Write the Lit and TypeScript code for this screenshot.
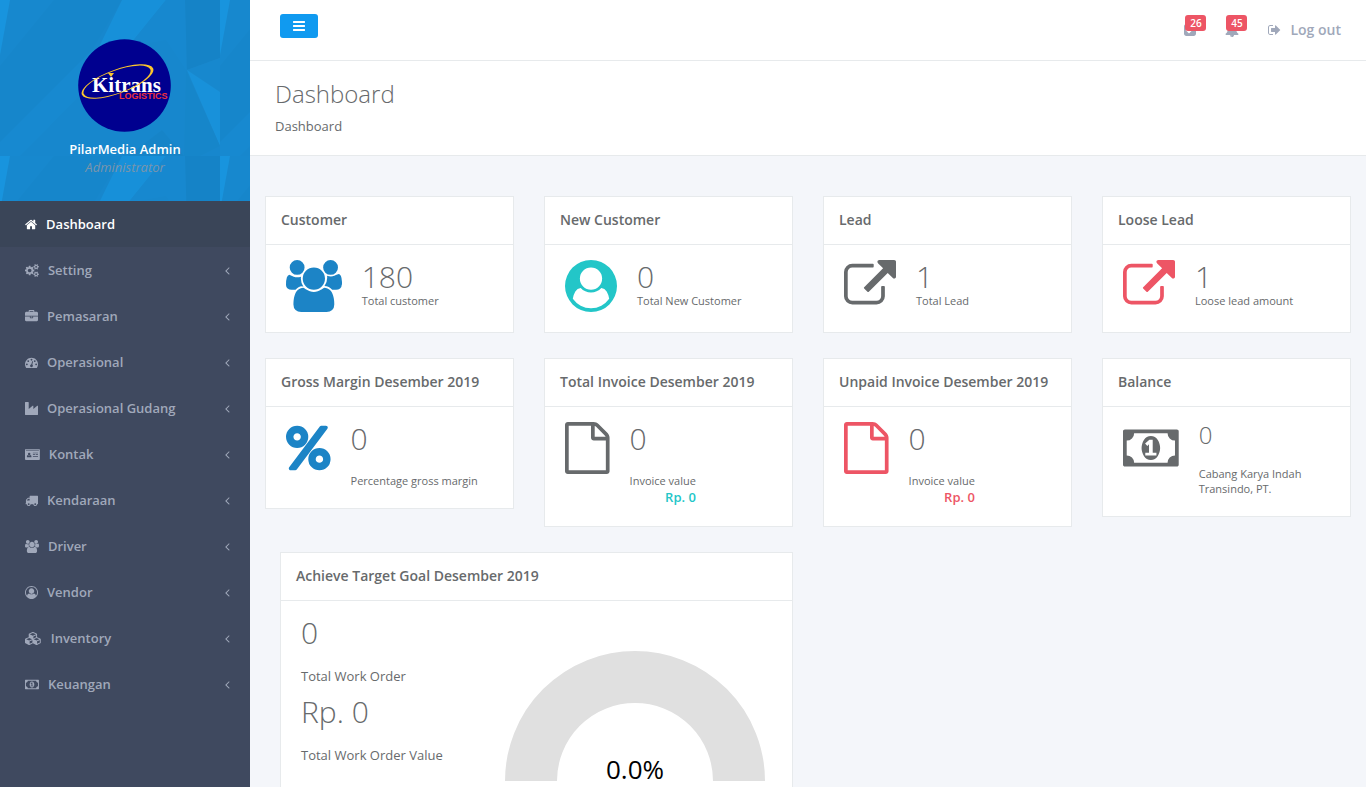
import { LitElement, html, svg, css, nothing } from "lit";
import { customElement, property, state } from "lit/decorators.js";

type Glyph = { w: number; d: string };

// Icon outlines on a 1792-unit tall grid, keyed by name.
const GLYPHS: Record<string, Glyph> = {
  home: { w: 1664, d: "M1408 992v480q0 26-19 45t-45 19h-384v-384h-256v384h-384q-26 0-45-19t-19-45v-480q0-1 .5-3t.5-3l575-474 575 474q1 2 1 6zm223-69l-62 74q-8 9-21 11h-3q-13 0-21-7l-692-577-692 577q-12 8-24 7-13-2-21-11l-62-74q-8-10-7-23.5t11-21.5l719-599q32-26 76-26t76 26l244 204v-195q0-14 9-23t23-9h192q14 0 23 9t9 23v408l219 182q10 8 11 21.5t-7 23.5z" },
  cogs: { w: 1920, d: "M896 896q0-106-75-181t-181-75-181 75-75 181 75 181 181 75 181-75 75-181zm768 512q0-52-38-90t-90-38-90 38-38 90q0 53 37.5 90.5t90.5 37.5 90.5-37.5 37.5-90.5zm0-1024q0-52-38-90t-90-38-90 38-38 90q0 53 37.5 90.5t90.5 37.5 90.5-37.5 37.5-90.5zm-384 421v185q0 10-7 19.5t-16 10.5l-155 24q-11 35-32 76 34 48 90 115 7 11 7 20 0 12-7 19-23 30-82.5 89.5t-78.5 59.5q-11 0-21-7l-115-90q-37 19-77 31-11 108-23 155-7 24-30 24h-186q-11 0-20-7.5t-10-17.5l-23-153q-34-10-75-31l-118 89q-7 7-20 7-11 0-21-8-144-133-144-160 0-9 7-19 10-14 41-53t47-61q-23-44-35-82l-152-24q-10-1-17-9.5t-7-19.5v-185q0-10 7-19.5t16-10.5l155-24q11-35 32-76-34-48-90-115-7-11-7-20 0-12 7-20 22-30 82-89t79-59q11 0 21 7l115 90q34-18 77-32 11-108 23-154 7-24 30-24h186q11 0 20 7.5t10 17.5l23 153q34 10 75 31l118-89q8-7 20-7 11 0 21 8 144 133 144 160 0 8-7 19-12 16-42 54t-45 60q23 48 34 82l152 23q10 2 17 10.5t7 19.5zm640 533v140q0 16-149 31-12 27-30 52 51 113 51 138 0 4-4 7-122 71-124 71-8 0-46-47t-52-68q-20 2-30 2t-30-2q-14 21-52 68t-46 47q-2 0-124-71-4-3-4-7 0-25 51-138-18-25-30-52-149-15-149-31v-140q0-16 149-31 13-29 30-52-51-113-51-138 0-4 4-7 4-2 35-20t59-34 30-16q8 0 46 46.5t52 67.5q20-2 30-2t30 2q51-71 92-112l6-2q4 0 124 70 4 3 4 7 0 25-51 138 17 23 30 52 149 15 149 31zm0-1024v140q0 16-149 31-12 27-30 52 51 113 51 138 0 4-4 7-122 71-124 71-8 0-46-47t-52-68q-20 2-30 2t-30-2q-14 21-52 68t-46 47q-2 0-124-71-4-3-4-7 0-25 51-138-18-25-30-52-149-15-149-31v-140q0-16 149-31 13-29 30-52-51-113-51-138 0-4 4-7 4-2 35-20t59-34 30-16q8 0 46 46.5t52 67.5q20-2 30-2t30 2q51-71 92-112l6-2q4 0 124 70 4 3 4 7 0 25-51 138 17 23 30 52 149 15 149 31z" },
  briefcase: { w: 1792, d: "M640 256h512v-128h-512v128zm1152 640v480q0 66-47 113t-113 47h-1472q-66 0-113-47t-47-113v-480h672v160q0 26 19 45t45 19h320q26 0 45-19t19-45v-160h672zm-768 0v128h-256v-128h256zm768-480v384h-1792v-384q0-66 47-113t113-47h352v-160q0-40 28-68t68-28h576q40 0 68 28t28 68v160h352q66 0 113 47t47 113z" },
  tachometer: { w: 1792, d: "M384 1152q0-53-37.5-90.5t-90.5-37.5-90.5 37.5-37.5 90.5 37.5 90.5 90.5 37.5 90.5-37.5 37.5-90.5zm192-448q0-53-37.5-90.5t-90.5-37.5-90.5 37.5-37.5 90.5 37.5 90.5 90.5 37.5 90.5-37.5 37.5-90.5zm428 481l101-382q6-26-7.5-48.5t-38.5-29.5-48 6.5-30 39.5l-101 382q-60 5-107 43.5t-63 98.5q-20 77 20 146t117 89 146-20 89-117q16-60-6-117t-72-91zm660-33q0-53-37.5-90.5t-90.5-37.5-90.5 37.5-37.5 90.5 37.5 90.5 90.5 37.5 90.5-37.5 37.5-90.5zm-640-640q0-53-37.5-90.5t-90.5-37.5-90.5 37.5-37.5 90.5 37.5 90.5 90.5 37.5 90.5-37.5 37.5-90.5zm448 192q0-53-37.5-90.5t-90.5-37.5-90.5 37.5-37.5 90.5 37.5 90.5 90.5 37.5 90.5-37.5 37.5-90.5zm320 448q0 261-141 483-19 29-54 29h-1402q-35 0-54-29-141-221-141-483 0-182 71-348t191-286 286-191 348-71 348 71 286 191 191 286 71 348z" },
  industry: { w: 1792, d: "M448 0q26 0 45 19t19 45v891l536-429q17-14 40-14 26 0 45 19t19 45v379l536-429q17-14 40-14 26 0 45 19t19 45v1152q0 26-19 45t-45 19h-1664q-26 0-45-19t-19-45v-1664q0-26 19-45t45-19h384z" },
  idcard: { w: 2048, d: "M160 128h1728q66 0 113 47t47 113v1216q0 66-47 113t-113 47h-1728q-66 0-113-47t-47-113v-1216q0-66 47-113t113-47zM128 256v96h1792v-96zM576 640a170 180 0 0 0 0 360a170 180 0 0 0 0-360zM400 960q-144 20-144 240q0 80 90 80h460q90 0 90-80q0-220-144-240q-70 90-176 90t-176-90zM1088 640v96h704v-96zM1088 864v96h320v-96zM1504 864v96h288v-96zM1088 1120v96h704v-96z" },
  truck: { w: 1792, d: "M640 1408q0-52-38-90t-90-38-90 38-38 90 38 90 90 38 90-38 38-90zm-384-512h384v-256h-158q-13 0-22 9l-195 195q-9 9-9 22v30zm1280 512q0-52-38-90t-90-38-90 38-38 90 38 90 90 38 90-38 38-90zm256-1088v1024q0 15-4 26.5t-13.5 18.5-16.5 11.5-23.5 6-22.5 2-25.5 0-22.5-.5q0 106-75 181t-181 75-181-75-75-181h-384q0 106-75 181t-181 75-181-75-75-181h-64q-3 0-22.5.5t-25.5 0-22.5-2-23.5-6-16.5-11.5-13.5-18.5-4-26.5q0-26 19-45t45-19v-320q0-8-.5-35t0-38 2.5-34.5 6.5-37 14-30.5 22.5-30l198-198q19-19 50.5-32t58.5-13h160v-192q0-26 19-45t45-19h1024q26 0 45 19t19 45z" },
  users: { w: 1920, d: "M593 896q-162 5-265 128h-134q-82 0-138-40.5t-56-118.5q0-353 124-353 6 0 43.5 21t97.5 42.5 119 21.5q67 0 133-23-5 37-5 66 0 159 93 287zm1071 637q0 120-73 189.5t-194 69.5h-874q-121 0-194-69.5t-73-189.5q0-53 3.5-103.5t14-109 26.5-108.5 43-97.5 62-81 85.5-53.5 111.5-20q10 0 43 21.5t73 48 107 48 135 21.5 135-21.5 107-48 73-48 43-21.5q61 0 111.5 20t85.5 53.5 62 81 43 97.5 26.5 108.5 14 109 3.5 103.5zm-1024-1277q0 106-75 181t-181 75-181-75-75-181 75-181 181-75 181 75 75 181zm704 384q0 159-112.5 271.5t-271.5 112.5-271.5-112.5-112.5-271.5 112.5-271.5 271.5-112.5 271.5 112.5 112.5 271.5zm576 225q0 78-56 118.5t-138 40.5h-134q-103-123-265-128 93-128 93-287 0-29-5-66 66 23 133 23 59 0 119-21.5t97.5-42.5 43.5-21q124 0 124 353zm-128-609q0 106-75 181t-181 75-181-75-75-181 75-181 181-75 181 75 75 181z" },
  userRing: { w: 1792, d: "M896 0q182 0 348 71t286 191 191 286 71 348q0 181-70.5 347t-190.5 286-286 191.5-349 71.5-349-71-285.5-191.5-190.5-286-71-347.5 71-348 191-286 286-191 348-71zm619 1351q149-205 149-455 0-156-61-298t-164-245-245-164-298-61-298 61-245 164-164 245-61 298q0 250 149 455 66-327 306-327 131 128 313 128t313-128q240 0 306 327zm-235-647q0-159-112.5-271.5t-271.5-112.5-271.5 112.5-112.5 271.5 112.5 271.5 271.5 112.5 271.5-112.5 112.5-271.5z" },
  userDisc: { w: 1792, d: "M1523 1339q-22-155-87.5-257.5t-184.5-118.5q-67 74-159.5 115.5t-195.5 41.5-195.5-41.5-159.5-115.5q-119 16-184.5 118.5t-87.5 257.5q106 150 271 237.5t356 87.5 356-87.5 271-237.5zm-243-699q0-159-112.5-271.5t-271.5-112.5-271.5 112.5-112.5 271.5 112.5 271.5 271.5 112.5 271.5-112.5 112.5-271.5zm512 256q0 182-71 347.5t-190.5 286-285.5 191.5-349 71q-182 0-348-71t-286-191-191-286-71-348 71-348 191-286 286-191 348-71 348 71 286 191 191 286 71 348z" },
  cubes: { w: 2304, d: "M640 1632l384-192v-314l-384 164v342zm-64-454l404-173-404-173-404 173zm1088 454l384-192v-314l-384 164v342zm-64-454l404-173-404-173-404 173zm-448-293l384-165v-266l-384 164v267zm-64-379l441-189-441-189-441 189zm1088 518v416q0 36-19 67t-52 47l-448 224q-25 14-57 14t-57-14l-448-224q-4-2-7-4-2 2-7 4l-448 224q-25 14-57 14t-57-14l-448-224q-33-16-52-47t-19-67v-416q0-38 21.5-70t56.5-48l434-186v-400q0-38 21.5-70t56.5-48l448-192q23-10 50-10t50 10l448 192q35 16 56.5 48t21.5 70v400l434 186q36 16 57 48t21 70z" },
  money: { w: 1920, d: "M768 1152h384v-96h-128v-448h-114l-148 137 77 80q42-37 55-57h2v288h-128v96zm512-256q0 70-21 142t-59.5 134-101.5 101-138 39-138-39-101.5-101-59.5-134-21-142 21-142 59.5-134 101.5-101 138-39 138 39 101.5 101 59.5 134 21 142zm512 256v-512q-106 0-181-75t-75-181h-1152q0 106-75 181t-181 75v512q106 0 181 75t75 181h1152q0-106 75-181t181-75zm128-832v1152q0 26-19 45t-45 19h-1792q-26 0-45-19t-19-45v-1152q0-26 19-45t45-19h1792q26 0 45 19t19 45z" },
  external: { w: 1792, d: "M1408 928v320q0 119-84.5 203.5t-203.5 84.5h-832q-119 0-203.5-84.5t-84.5-203.5v-832q0-119 84.5-203.5t203.5-84.5h704q14 0 23 9t9 23v64q0 14-9 23t-23 9h-704q-66 0-113 47t-47 113v832q0 66 47 113t113 47h832q66 0 113-47t47-113v-320q0-14 9-23t23-9h64q14 0 23 9t9 23zm384-864v512q0 26-19 45t-45 19-45-19l-176-176-652 652q-10 10-23 10t-23-10l-114-114q-10-10-10-23t10-23l652-652-176-176q-19-19-19-45t19-45 45-19h512q26 0 45 19t19 45z" },
  percent: { w: 1536, d: "M1280 1280q0-52-38-90t-90-38-90 38-38 90 38 90 90 38 90-38 38-90zm-768-768q0-52-38-90t-90-38-90 38-38 90 38 90 90 38 90-38 38-90zm1024 768q0 159-112.5 271.5t-271.5 112.5-271.5-112.5-112.5-271.5 112.5-271.5 271.5-112.5 271.5 112.5 112.5 271.5zm-96-1088q0 20-13 38l-1056 1408q-19 26-51 26h-160q-26 0-45-19t-19-45q0-20 13-38l1056-1408q19-26 51-26h160q26 0 45 19t19 45zm-672 320q0 159-112.5 271.5t-271.5 112.5-271.5-112.5-112.5-271.5 112.5-271.5 271.5-112.5 271.5 112.5 112.5 271.5z" },
  file: { w: 1536, d: "M1468 380q28 28 48 76t20 88v1152q0 40-28 68t-68 28h-1344q-40 0-68-28t-28-68v-1600q0-40 28-68t68-28h896q40 0 88 20t76 48zm-444-244v376h376q-10-29-22-41l-313-313q-12-12-41-22zm384 1528v-1024h-416q-40 0-68-28t-28-68v-416h-768v1536h1280z" },
  angle: { w: 640, d: "M627 544q0 13-10 23l-393 393 393 393q10 10 10 23t-10 23l-50 50q-10 10-23 10t-23-10l-466-466q-10-10-10-23t10-23l466-466q10-10 23-10t23 10l50 50q10 10 10 23z" },
  bars: { w: 1536, d: "M1536 1344v128q0 26-19 45t-45 19h-1408q-26 0-45-19t-19-45v-128q0-26 19-45t45-19h1408q26 0 45 19t19 45zm0-512v128q0 26-19 45t-45 19h-1408q-26 0-45-19t-19-45v-128q0-26 19-45t45-19h1408q26 0 45 19t19 45zm0-512v128q0 26-19 45t-45 19h-1408q-26 0-45-19t-19-45v-128q0-26 19-45t45-19h1408q26 0 45 19t19 45z" },
  check: { w: 1536, d: "M685 1299l614-614q19-19 19-45t-19-45l-102-102q-19-19-45-19t-45 19l-467 467-211-211q-19-19-45-19t-45 19l-102 102q-19 19-19 45t19 45l358 358q19 19 45 19t45-19zm851-883v960q0 119-84.5 203.5t-203.5 84.5h-960q-119 0-203.5-84.5t-84.5-203.5v-960q0-119 84.5-203.5t203.5-84.5h960q119 0 203.5 84.5t84.5 203.5z" },
  bell: { w: 1792, d: "M912 1696q0-16-16-16-59 0-101.5-42.5t-42.5-101.5q0-16-16-16t-16 16q0 73 51.5 124.5t124.5 51.5q16 0 16-16zm816-288q0 52-38 90t-90 38h-448q0 106-75 181t-181 75-181-75-75-181h-448q-52 0-90-38t-38-90q50-42 91-88t85-119.5 74.5-158.5 50-206 19.5-260q0-152 117-282.5t307-158.5q-8-19-8-39 0-40 28-68t68-28 68 28 28 68q0 20-8 39 190 28 307 158.5t117 282.5q0 139 19.5 260t50 206 74.5 158.5 85 119.5 91 88z" },
  signout: { w: 1664, d: "M640 1440q0 4 1 20t.5 26.5-3 23.5-10 19.5-20.5 6.5h-320q-119 0-203.5-84.5t-84.5-203.5v-704q0-119 84.5-203.5t203.5-84.5h320q13 0 22.5 9.5t9.5 22.5q0 4 1 20t.5 26.5-3 23.5-10 19.5-20.5 6.5h-320q-66 0-113 47t-47 113v704q0 66 47 113t113 47h312l11.5 1 11.5 3 8 5.5 7 9 2 13.5zm928-544q0 26-19 45l-544 544q-19 19-45 19t-45-19-19-45v-288h-448q-26 0-45-19t-19-45v-384q0-26 19-45t45-19h448v-288q0-26 19-45t45-19 45 19l544 544q19 19 19 45z" },
};

@customElement("glyph-icon")
class GlyphIcon extends LitElement {
  @property() name = "home";

  static styles = css`
    :host { display: inline-flex; flex: none; }
    svg { display: block; height: 1em; fill: currentColor; fill-rule: evenodd; }
  `;

  render() {
    const g = GLYPHS[this.name];
    return html`<svg viewBox="0 0 ${g.w} 1792" aria-hidden="true">${svg`<path d=${g.d}></path>`}</svg>`;
  }
}

@customElement("kitrans-logo")
class KitransLogo extends LitElement {
  static styles = css`
    :host { display: block; }
    svg { display: block; width: 94px; height: 93px; }
    .disc { fill: #00008f; }
    .ring { fill: #fcc52c; fill-rule: evenodd; }
    .word { fill: #ffffff; font: bold 21px "Liberation Serif", serif; }
    .sub { fill: #f0323c; font: bold 9px "Liberation Sans", sans-serif; }
  `;

  render() {
    return html`<svg viewBox="0 0 94 93" role="img" aria-label="Kitrans Logistics">
      <circle class="disc" cx="46.5" cy="46.5" r="46.3"></circle>
      <text class="word" x="14" y="53">Kitrans</text>
      <g transform="translate(39.5 42.5) rotate(-20)">
        <path class="ring" d="M-38 0a38 12 0 1 0 76 0a38 12 0 1 0-76 0zM-36 0a35.500 11.200 0 1 0 71 0a35.500 11.200 0 1 0-71 0z"></path>
      </g>
      <path class="ring" d="M30 34l6 0-3 4z"></path>
      <text class="sub" x="41" y="60">LOGISTICS</text>
    </svg>`;
  }
}

@customElement("stat-card")
class StatCard extends LitElement {
  @property() heading = "";
  @property() icon = "";
  @property() tone = "";
  @property() value = "";
  @property() label = "";
  @property() amount = "";
  @property({ type: Boolean }) spaced = false;
  @property({ type: Boolean }) small = false;

  static styles = css`
    :host { display: block; background: #ffffff; border: 1px solid #e7eaec; }
    .heading { margin: 0; padding: 14px 15px 15px; border-bottom: 1px solid #e7eaec; font-size: 14px; line-height: 18px; font-weight: 600; }
    .body { display: flex; align-items: flex-start; gap: 20px; padding: 15px 20px 20px; }
    glyph-icon { font-size: 52px; }
    .blue { color: #1c84c6; }
    .teal { color: #23c6c8; }
    .red { color: #ed5565; }
    .value { font-size: 30px; line-height: 33px; font-weight: 300; }
    .label { font-size: 11px; line-height: 15px; }
    .spaced { padding-top: 18px; }
    .small { font-size: 24px; line-height: 26px; }
    .amount { font-size: 13px; line-height: 18px; font-weight: 600; text-align: right; }
  `;

  render() {
    return html`
      <h2 class="heading">${this.heading}</h2>
      <div class="body">
        <glyph-icon class=${this.tone} name=${this.icon}></glyph-icon>
        <div>
          <div class="value ${this.small ? "small" : ""}">${this.value}</div>
          <div class="label ${this.spaced ? "spaced" : ""}">${this.label}</div>
          ${this.amount ? html`<div class="amount ${this.tone || "teal"}">${this.amount}</div>` : nothing}
        </div>
      </div>`;
  }
}

const MENU: [string, string][] = [
  ["home", "Dashboard"],
  ["cogs", "Setting"],
  ["briefcase", "Pemasaran"],
  ["tachometer", "Operasional"],
  ["industry", "Operasional Gudang"],
  ["idcard", "Kontak"],
  ["truck", "Kendaraan"],
  ["users", "Driver"],
  ["userRing", "Vendor"],
  ["cubes", "Inventory"],
  ["money", "Keuangan"],
];

@customElement("app-root")
class AppRoot extends LitElement {
  @state() private collapsed = false;

  static styles = css`
    :host { display: block; font: 13px/18px "Open Sans", "Noto Sans", sans-serif; color: #676a6c; }
    *, *::before { box-sizing: border-box; }
    a { color: inherit; text-decoration: none; }
    .shell { display: flex; height: 100vh; background: #f4f6fa; }
    .sidebar { flex: 0 0 250px; background: #3f495f; overflow: hidden; }
    .collapsed .sidebar { display: none; }
    .profile { position: relative; display: flex; flex-direction: column; align-items: center; padding: 39px 25px 25px; }
    .facets { position: absolute; inset: 0; width: 100%; height: 100%; }
    .profile > :not(.facets) { position: relative; }
    .name { margin-top: 8px; color: #ffffff; font-weight: 600; }
    .role { color: #7b95ab; font-style: italic; font-weight: 400; }
    .menu { margin: 0; padding: 0; list-style: none; }
    .item { display: flex; align-items: center; gap: 9px; height: 46px; padding: 0 20px 0 25px; color: #a0a8ba; font-weight: 600; }
    .item.active { background: #3a4558; color: #ffffff; }
    .item .text { flex: 1; }
    .main { flex: 1; min-width: 0; overflow-y: auto; scrollbar-width: none; }
    .topbar { display: flex; align-items: center; justify-content: space-between; height: 61px; padding: 0 25px 0 30px; background: #ffffff; border-bottom: 1px solid #e7eaec; }
    .toggle { display: flex; align-items: center; justify-content: center; width: 38px; height: 24px; margin-bottom: 8px; padding: 0; border: 0; border-radius: 3px; background: #109af0; color: #ffffff; font-size: 14px; }
    .actions { display: flex; align-items: center; gap: 29px; color: #a0a8ba; font-size: 14px; font-weight: 600; }
    .alert { position: relative; display: flex; }
    .badge { position: absolute; left: 1px; bottom: 6px; width: 21px; height: 16px; border-radius: 3px; background: #ed5565; color: #ffffff; font-size: 10px; line-height: 16px; font-weight: 600; text-align: center; }
    .logout { display: flex; align-items: center; gap: 9px; }
    .heading { padding: 19px 25px 20px; background: #ffffff; border-bottom: 1px solid #e7eaec; }
    .heading h1 { margin: 0 0 10px; font-size: 24px; line-height: 27px; font-weight: 300; }
    .cards { display: grid; grid-template-columns: repeat(4, minmax(0, 1fr)); align-items: start; gap: 25px 30px; padding: 40px 15px; }
    .target { grid-column: span 2; margin-left: 15px; background: #ffffff; border: 1px solid #e7eaec; }
    .target h2 { margin: 0; padding: 14px 15px 15px; border-bottom: 1px solid #e7eaec; font-size: 14px; line-height: 18px; font-weight: 600; }
    .split { display: grid; grid-template-columns: 5fr 7fr; padding: 15px 20px 20px; }
    .total { padding-bottom: 17px; font-size: 30px; line-height: 34px; font-weight: 300; }
    .caption { margin: 0 0 10px; white-space: nowrap; }
    .gauge { display: block; width: 100%; max-width: 262px; margin: 34px auto 0; }
    .arc { fill: none; stroke: #e0e0e0; stroke-width: 52; }
    .reading { fill: #000000; font-size: 26px; text-anchor: middle; }
  `;

  private facets() {
    return html`<svg class="facets" aria-hidden="true">
      <defs>
        <pattern id="facet" width="220" height="156" patternUnits="userSpaceOnUse">
          <rect width="220" height="156" fill="#1787cd"></rect>
          <path d="M10 0h44l-54 66v-11z" fill="#1788ce"></path>
          <path d="M54 0h68l-30 50-54 62-38 30v-76z" fill="#1686cb"></path>
          <path d="M92 50l36-3-108 109h-20v-14z" fill="#1789d0"></path>
          <path d="M0 0h10l-10 55z" fill="#1894de"></path>
          <path d="M122 0h44l-38 47-30 2z" fill="#1790d9"></path>
          <path d="M166 0h20v70l-20-30-38 7z" fill="#1788cf"></path>
          <path d="M185 0h35v58l-33 12z" fill="#1583c7"></path>
          <path d="M187 70l33-12v34z" fill="#1788ce"></path>
          <path d="M187 70l33 22v54z" fill="#1891da"></path>
          <path d="M186 70l34 76-20 10h-16z" fill="#1686ca"></path>
          <path d="M128 156l34-26 22 26z" fill="#1684c8"></path>
        </pattern>
      </defs>
      <rect width="100%" height="100%" fill="url(#facet)"></rect>
    </svg>`;
  }

  render() {
    return html`
      <div class="shell ${this.collapsed ? "collapsed" : ""}">
        <nav class="sidebar">
          <div class="profile">
            ${this.facets()}
            <kitrans-logo></kitrans-logo>
            <div class="name">PilarMedia Admin</div>
            <div class="role">Administrator</div>
          </div>
          <ul class="menu">
            ${MENU.map(
              ([icon, text], i) => html`<li>
                <a class="item ${i === 0 ? "active" : ""}" href="#">
                  <glyph-icon name=${icon}></glyph-icon>
                  <span class="text">${text}</span>
                  ${i ? html`<glyph-icon name="angle"></glyph-icon>` : nothing}
                </a>
              </li>`
            )}
          </ul>
        </nav>
        <main class="main">
          <div class="topbar">
            <button class="toggle" aria-label="Toggle menu" @click=${() => (this.collapsed = !this.collapsed)}>
              <glyph-icon name="bars"></glyph-icon>
            </button>
            <div class="actions">
              <a class="alert" href="#" aria-label="Tasks"><glyph-icon name="check"></glyph-icon><span class="badge">26</span></a>
              <a class="alert" href="#" aria-label="Notifications"><glyph-icon name="bell"></glyph-icon><span class="badge">45</span></a>
              <a class="logout" href="#"><glyph-icon name="signout"></glyph-icon>Log out</a>
            </div>
          </div>
          <header class="heading">
            <h1>Dashboard</h1>
            <div>Dashboard</div>
          </header>
          <div class="cards">
            <stat-card heading="Customer" icon="users" tone="blue" value="180" label="Total customer"></stat-card>
            <stat-card heading="New Customer" icon="userDisc" tone="teal" value="0" label="Total New Customer"></stat-card>
            <stat-card heading="Lead" icon="external" value="1" label="Total Lead"></stat-card>
            <stat-card heading="Loose Lead" icon="external" tone="red" value="1" label="Loose lead amount"></stat-card>
            <stat-card heading="Gross Margin Desember 2019" icon="percent" tone="blue" value="0" label="Percentage gross margin" spaced></stat-card>
            <stat-card heading="Total Invoice Desember 2019" icon="file" value="0" label="Invoice value" amount="Rp. 0" spaced></stat-card>
            <stat-card heading="Unpaid Invoice Desember 2019" icon="file" tone="red" value="0" label="Invoice value" amount="Rp. 0" spaced></stat-card>
            <stat-card heading="Balance" icon="money" value="0" label="Cabang Karya Indah Transindo, PT." spaced small></stat-card>
            <section class="target">
              <h2>Achieve Target Goal Desember 2019</h2>
              <div class="split">
                <div>
                  <div class="total">0</div>
                  <p class="caption">Total Work Order</p>
                  <div class="total">Rp. 0</div>
                  <p class="caption">Total Work Order Value</p>
                </div>
                <svg class="gauge" viewBox="0 0 262 150" role="img" aria-label="Target achieved">
                  <path class="arc" d="M27 131a104 104 0 0 1 208 0"></path>
                  <text class="reading" x="131" y="129">0.0%</text>
                </svg>
              </div>
            </section>
          </div>
        </main>
      </div>`;
  }
}
